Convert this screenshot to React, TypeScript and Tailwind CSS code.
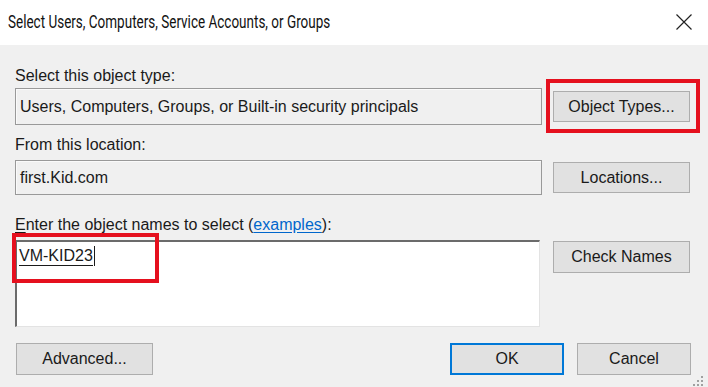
import React from "react";

const ui = "font-['Liberation_Sans',Arial,sans-serif]";

function WinButton({ label, className = "", primary = false }: { label: string; className?: string; primary?: boolean }) {
  return (
    <div
      className={`flex items-center justify-center bg-[#e1e1e1] text-[16px] text-[#1a1a1a] ${
        primary ? "border-2 border-[#0078d7]" : "border border-[#adadad]"
      } ${className}`}
    >
      {label}
    </div>
  );
}

function ReadBox({ text, className = "" }: { text: string; className?: string }) {
  return (
    <div className={`flex w-[527px] items-center border border-[#999] bg-[#f0f0f0] pl-[4px] text-[16px] text-[#1a1a1a] shadow-[inset_1px_1px_0_#fafafa] ${className}`}>
      {text}
    </div>
  );
}

export default function App() {
  return (
    <div className={`relative flex h-[387px] w-[708px] flex-col overflow-hidden ${ui}`}>
      {/* title bar */}
      <div className="flex h-[45px] items-center justify-between bg-white pl-[8px] pr-[16px]">
        <span className="origin-left scale-x-[0.71] whitespace-nowrap font-['Roboto',sans-serif] text-[19px] text-[#111]">
          Select Users, Computers, Service Accounts, or Groups
        </span>
        <svg width="16" height="16" viewBox="0 0 16 16" className="mb-[2px]">
          <path d="M0.5 0.5 L15.5 15.5 M15.5 0.5 L0.5 15.5" stroke="#222" strokeWidth="1.2" />
        </svg>
      </div>

      <div className="flex flex-1 flex-col bg-[#f0f0f0] pl-[15px] pt-[22px]">
        <div className="h-[18px] text-[16px] leading-[18px] text-[#1a1a1a]">Select this object type:</div>
        <div className="mt-[3px] flex items-center">
          <ReadBox text="Users, Computers, Groups, or Built-in security principals" className="h-[37px]" />
          <div className="relative ml-[11px]">
            <WinButton label="Object Types..." className="h-[31px] w-[137px]" />
            <span className="absolute -bottom-[11px] -left-[7px] -right-[10px] -top-[12px] border-4 border-[#e5101e]" />
          </div>
        </div>

        <div className="mt-[11px] h-[18px] text-[16px] leading-[18px] text-[#1a1a1a]">From this location:</div>
        <div className="mt-[6px] flex items-start">
          <ReadBox text="first.Kid.com" className="h-[35px] pl-[2px]" />
          <WinButton label="Locations..." className="ml-[11px] mt-[2px] h-[31px] w-[137px]" />
        </div>

        <div className="mt-[21px] h-[18px] text-[16px] leading-[18px] text-[#1a1a1a]">
          <span className="underline underline-offset-2">E</span>nter the object names to select (
          <span className="text-[#0066cc] underline underline-offset-2">examples</span>):
        </div>
        <div className="mt-[6px] flex items-start">
          <div className="relative h-[87px] w-[525px] border-b border-l-2 border-r border-t-2 border-b-[#e3e3e3] border-l-[#6b6b6b] border-r-[#e3e3e3] border-t-[#6b6b6b] bg-white">
            <div className="ml-[2px] mt-[4px] flex items-center text-[16px] leading-[18px] text-[#1a1a1a]">
              <span className="border-b border-[#1a1a1a]">VM-KID23</span>
              <span className="ml-[1px] h-[20px] w-[1px] bg-[#1a1a1a]" />
            </div>
            <span className="absolute -left-[5px] -top-[9px] h-[50px] w-[147px] border-4 border-[#e5101e]" />
          </div>
          <WinButton label="Check Names" className="ml-[13px] mt-[1px] h-[32px] w-[137px]" />
        </div>

        <div className="mt-[16px] flex items-start">
          <WinButton label="Advanced..." className="ml-[1px] h-[32px] w-[137px]" />
          <WinButton label="OK" primary className="ml-[297px] h-[32px] w-[114px]" />
          <WinButton label="Cancel" className="ml-[13px] h-[32px] w-[114px]" />
        </div>
      </div>

      {/* resize grip */}
      <svg width="12" height="12" viewBox="0 0 12 12" className="absolute bottom-[0px] right-[4px]">
        <g fill="#a0a0a0">
          <rect x="9" y="1" width="2" height="2" />
          <rect x="5" y="5" width="2" height="2" />
          <rect x="9" y="5" width="2" height="2" />
          <rect x="1" y="9" width="2" height="2" />
          <rect x="5" y="9" width="2" height="2" />
          <rect x="9" y="9" width="2" height="2" />
        </g>
      </svg>
    </div>
  );
}
